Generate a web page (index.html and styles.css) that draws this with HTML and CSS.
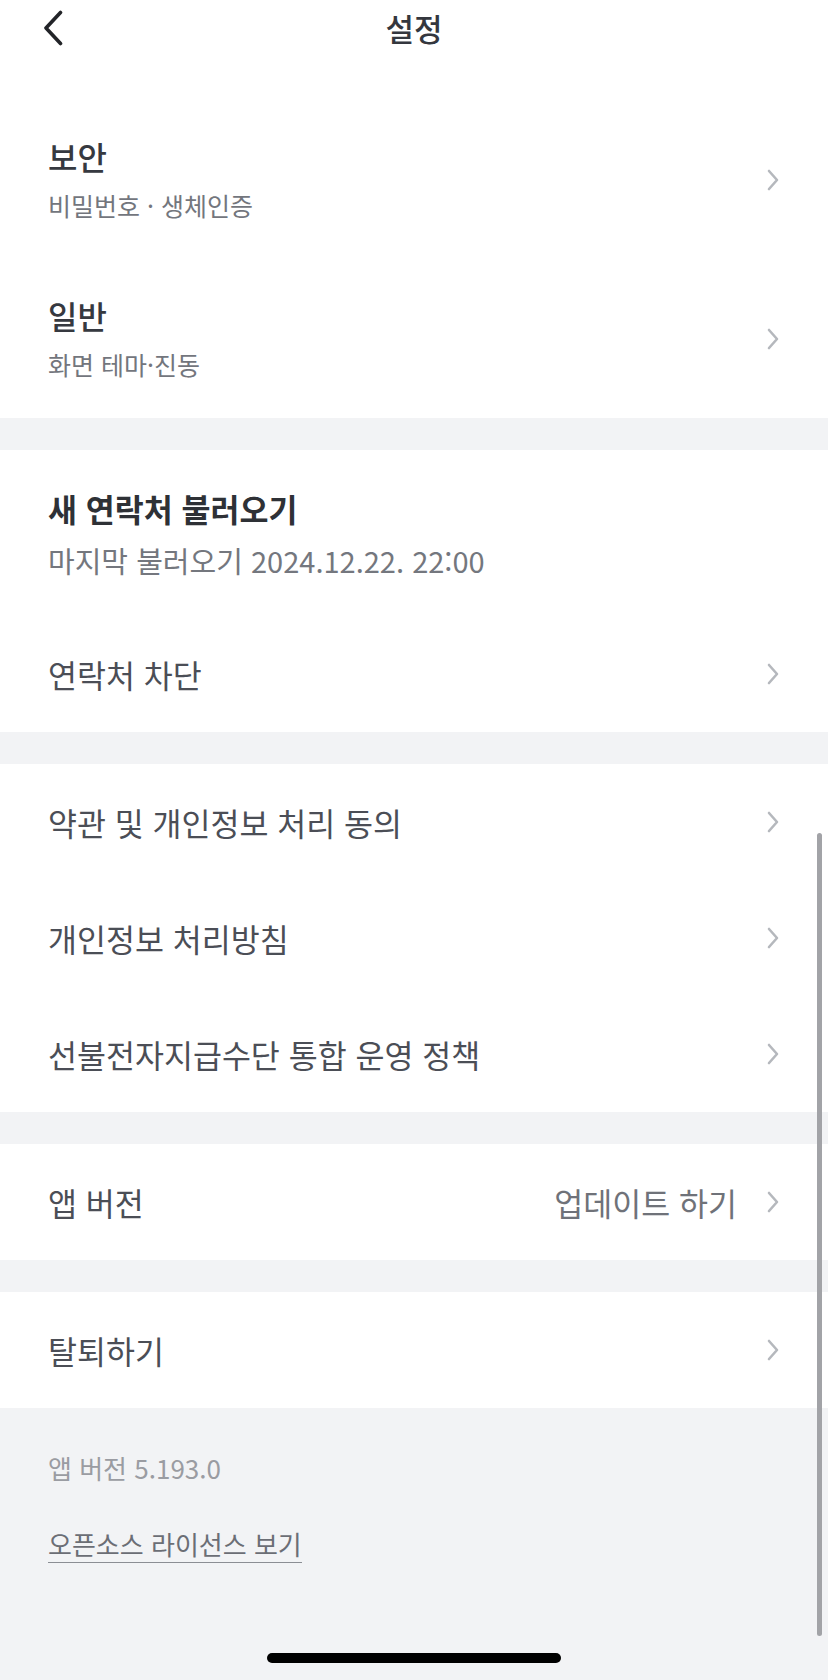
FILE: index.html
```html
<!DOCTYPE html>
<html lang="ko">
<head>
    <meta charset="UTF-8">
    <meta name="viewport" content="width=device-width, initial-scale=1.0">
    <title>설정</title>
    <link rel="stylesheet" href="styles.css">
</head>
<body>

    <header class="top-bar">
        <button class="back-button" aria-label="뒤로">
            <svg width="22" height="36" viewBox="0 0 22 36">
                <path d="M18.5 2.5 L4 18 L18.5 33.5" fill="none" stroke="#222428" stroke-width="3.6" stroke-linecap="round" stroke-linejoin="round"/>
            </svg>
        </button>
        <h1>설정</h1>
        <span></span>
    </header>

    <section class="group group-first">
        <a class="row">
            <div class="row-text">
                <div class="row-title">보안</div>
                <div class="row-sub">비밀번호 · 생체인증</div>
            </div>
            <svg class="chevron" width="12" height="22" viewBox="0 0 12 22"><path d="M2 2 L10 11 L2 20"/></svg>
        </a>
        <a class="row">
            <div class="row-text">
                <div class="row-title">일반</div>
                <div class="row-sub">화면 테마·진동</div>
            </div>
            <svg class="chevron" width="12" height="22" viewBox="0 0 12 22"><path d="M2 2 L10 11 L2 20"/></svg>
        </a>
    </section>

    <section class="group">
        <div class="import-row">
            <div class="import-title">새 연락처 불러오기</div>
            <div class="import-sub">마지막 불러오기 2024.12.22. 22:00</div>
        </div>
        <a class="row row-simple">
            <span class="row-label">연락처 차단</span>
            <svg class="chevron" width="12" height="22" viewBox="0 0 12 22"><path d="M2 2 L10 11 L2 20"/></svg>
        </a>
    </section>

    <section class="group">
        <a class="row row-simple">
            <span class="row-label">약관 및 개인정보 처리 동의</span>
            <svg class="chevron" width="12" height="22" viewBox="0 0 12 22"><path d="M2 2 L10 11 L2 20"/></svg>
        </a>
        <a class="row row-simple">
            <span class="row-label">개인정보 처리방침</span>
            <svg class="chevron" width="12" height="22" viewBox="0 0 12 22"><path d="M2 2 L10 11 L2 20"/></svg>
        </a>
        <a class="row row-simple">
            <span class="row-label">선불전자지급수단 통합 운영 정책</span>
            <svg class="chevron" width="12" height="22" viewBox="0 0 12 22"><path d="M2 2 L10 11 L2 20"/></svg>
        </a>
    </section>

    <section class="group">
        <a class="row row-simple">
            <span class="row-label">앱 버전</span>
            <span class="row-end">
                <span class="row-value">업데이트 하기</span>
                <svg class="chevron" width="12" height="22" viewBox="0 0 12 22"><path d="M2 2 L10 11 L2 20"/></svg>
            </span>
        </a>
    </section>

    <section class="group">
        <a class="row row-simple">
            <span class="row-label">탈퇴하기</span>
            <svg class="chevron" width="12" height="22" viewBox="0 0 12 22"><path d="M2 2 L10 11 L2 20"/></svg>
        </a>
    </section>

    <footer class="footer">
        <div class="version">앱 버전 5.193.0</div>
        <a class="license-link">오픈소스 라이선스 보기</a>
    </footer>

    <!-- scroll indicator and home bar sit over the page -->
    <div class="scroll-thumb"></div>
    <div class="home-indicator"></div>

</body>
</html>
```

FILE: styles.css
```css
body {
    font-family: "Noto Sans CJK KR", "Noto Sans", sans-serif;
    margin: 0;
    padding: 0;
    background-color: #f2f3f5;
    color: #33363d;
    width: 828px;
    min-height: 1680px;
    position: relative;
    overflow: hidden;
}

.top-bar {
    display: grid;
    grid-template-columns: 1fr auto 1fr;
    align-items: center;
    height: 56px;
    background-color: #fff;
}

.back-button {
    justify-self: start;
    display: flex;
    margin-left: 42px;
    padding: 0;
    border: none;
    background: none;
}

.top-bar h1 {
    margin: 0;
    font-size: 31px;
    font-weight: 500;
    line-height: 56px;
    color: #34373e;
}

.group {
    background-color: #fff;
}

.group + .group {
    margin-top: 32px;
}

.group-first {
    padding-top: 44px;
}

.row {
    display: flex;
    align-items: center;
    justify-content: space-between;
    padding: 0 49px 0 48px;
}

.row-text {
    padding: 38px 0 39px;
}

.row-title {
    font-size: 32px;
    font-weight: 500;
    line-height: 36px;
    color: #363940;
}

.row-sub {
    margin-top: 16px;
    font-size: 25px;
    line-height: 30px;
    color: #73767d;
}

.row-simple {
    height: 116px;
}

.row-label {
    font-size: 31.5px;
    color: #4b4e56;
}

.row-end {
    display: flex;
    align-items: center;
    gap: 30px;
}

.row-value {
    font-size: 31.5px;
    color: #6f7279;
}

.chevron path {
    fill: none;
    stroke: #b5b8bd;
    stroke-width: 2.6;
    stroke-linecap: round;
    stroke-linejoin: round;
}

.import-row {
    padding: 38px 48px;
}

.import-title {
    font-size: 31.5px;
    font-weight: 700;
    line-height: 40px;
    color: #2e3136;
}

.import-sub {
    margin-top: 14px;
    font-size: 29px;
    line-height: 36px;
    color: #74777e;
}

.footer {
    padding: 42px 48px;
}

.version {
    font-size: 26px;
    line-height: 36px;
    color: #9a9ca2;
}

.license-link {
    display: inline-block;
    margin-top: 40px;
    font-size: 26px;
    line-height: 36px;
    color: #6b6e75;
    border-bottom: 1px solid #8b8e94;
}

.scroll-thumb {
    position: absolute;
    top: 833px;
    right: 6px;
    width: 5px;
    height: 803px;
    border-radius: 3px;
    background-color: #a2a3a7;
}

.home-indicator {
    position: absolute;
    left: 267px;
    top: 1653px;
    width: 294px;
    height: 10px;
    border-radius: 5px;
    background-color: #000;
}
```
